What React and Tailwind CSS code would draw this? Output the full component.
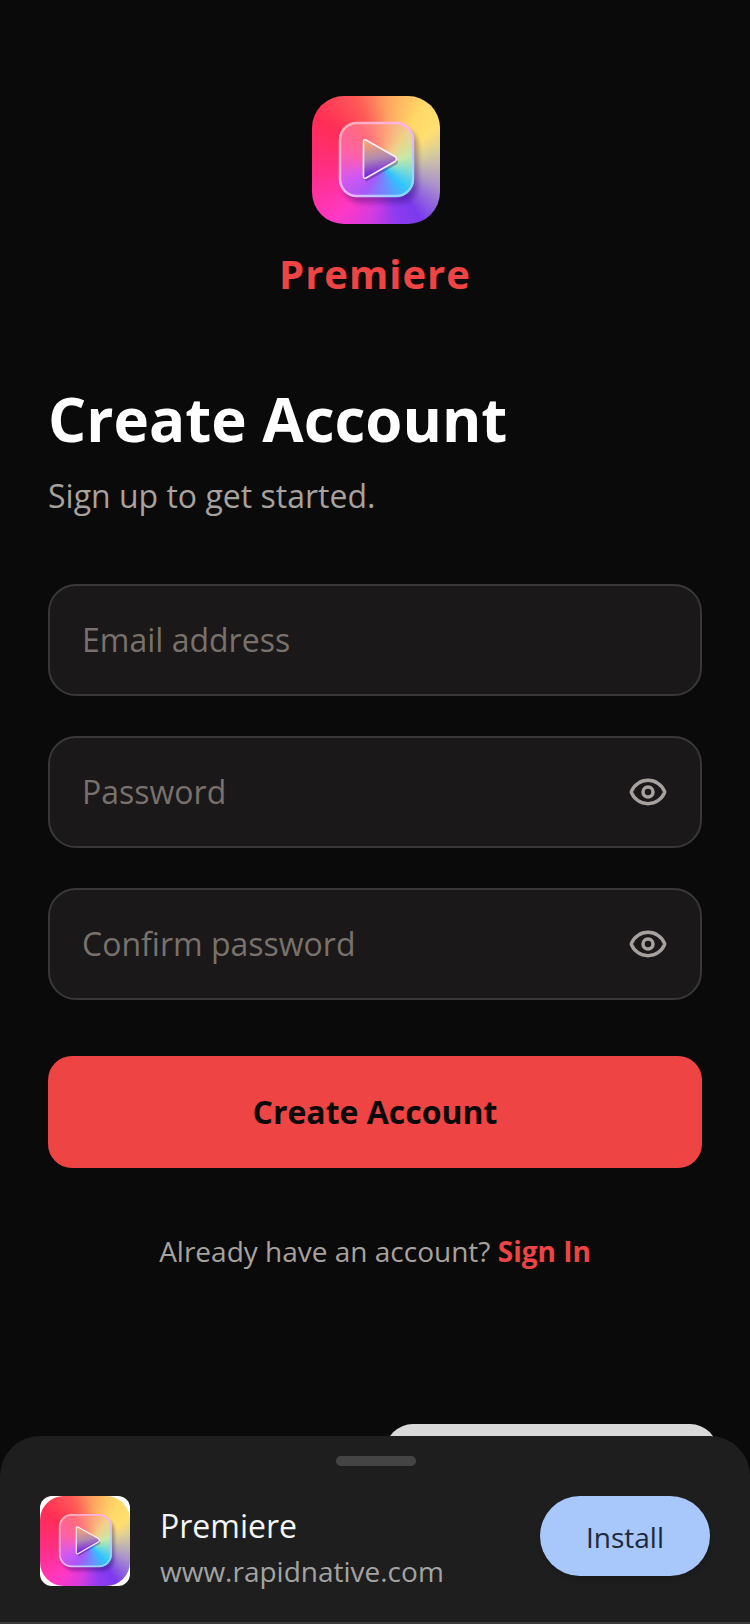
const FONT = "font-['Open_Sans','Noto_Sans',sans-serif]";

function EyeIcon() {
  return (
    <svg width="40" height="40" viewBox="0 0 24 24" fill="none" stroke="#a8a29e" strokeWidth="2.1" strokeLinecap="round" strokeLinejoin="round">
      <path d="M2.06 12.35a1 1 0 0 1 0-.7 10.75 10.75 0 0 1 19.88 0 1 1 0 0 1 0 .7 10.75 10.75 0 0 1-19.88 0" />
      <circle cx="12" cy="12" r="3" />
    </svg>
  );
}

function AppIcon({ id, className }) {
  return (
    <div className={`relative overflow-hidden bg-[conic-gradient(from_0deg_at_60%_56%,#ffa860_0deg,#ffd868_28deg,#ffe070_50deg,#d8cb9c_72deg,#bdb0b4_92deg,#a890cc_112deg,#7c3aed_148deg,#8f3cf0_172deg,#d43ce0_200deg,#ff38c4_228deg,#ff2f88_265deg,#ff2d55_305deg,#ff5a58_335deg,#ffa860_360deg)] ${className}`}>
      <svg viewBox="0 0 128 128" className="absolute inset-0 w-full h-full">
        <defs>
          <filter id={`${id}-blur`} x="-30%" y="-30%" width="160%" height="160%">
            <feGaussianBlur stdDeviation="2.5" />
          </filter>
        </defs>
        <rect x="31" y="32" width="75" height="75" rx="18" fill="#2a1070" opacity="0.38" filter={`url(#${id}-blur)`} />
      </svg>
      <div className="absolute left-[21%] top-[20.3%] w-[58.6%] h-[58.6%] rounded-[24%] bg-[conic-gradient(from_0deg_at_58%_58%,#ff9a78_0deg,#f0d088_35deg,#c8e8a8_70deg,#80dcd0_100deg,#30c4ff_135deg,#6a90ff_170deg,#a858f8_215deg,#d458f0_250deg,#ff60a8_290deg,#ff6c7c_330deg,#ff9a78_360deg)]" />
      <svg viewBox="0 0 128 128" className="absolute inset-0 w-full h-full">
        <defs>
          <linearGradient id={`${id}-edge`} x1="0" y1="0" x2="1" y2="1">
            <stop offset="0" stopColor="#ffb0b0" />
            <stop offset="0.5" stopColor="#ffb0f4" />
            <stop offset="1" stopColor="#6fe0ff" />
          </linearGradient>
          <linearGradient id={`${id}-play`} x1="0.15" y1="0" x2="0.3" y2="1">
            <stop offset="0" stopColor="#ffa868" />
            <stop offset="0.5" stopColor="#b08ab0" />
            <stop offset="1" stopColor="#6a10e8" />
          </linearGradient>
        </defs>
        <rect x="28" y="27" width="73" height="73" rx="17" fill="none" stroke={`url(#${id}-edge)`} strokeWidth="2.5" />
        <path d="M54 44 L83 60.5 Q86 63 83 65.5 L54 82 Q51.5 83 51.5 80 V46 Q51.5 43 54 44 Z" fill="#2a1070" opacity="0.35" transform="translate(1.5 3)" />
        <path d="M54 44 L83 60.5 Q86 63 83 65.5 L54 82 Q51.5 83 51.5 80 V46 Q51.5 43 54 44 Z" fill={`url(#${id}-play)`} stroke="#fbeef8" strokeWidth="1.6" strokeLinejoin="round" />
      </svg>
    </div>
  );
}

function Field({ placeholder, eye }) {
  return (
    <div className="h-28 flex items-center justify-between pl-[32px] pr-[32px] bg-[#1b1819] border-2 border-[#383838] rounded-[28px]">
      <input
        readOnly
        placeholder={placeholder}
        className="flex-1 min-w-0 bg-transparent outline-none text-[32px] text-white placeholder:text-[#78716c]"
      />
      {eye && <EyeIcon />}
    </div>
  );
}

export default function App() {
  return (
    <div className={`relative h-[1624px] w-[750px] overflow-hidden bg-[#0a0a0a] ${FONT}`}>
      <div className="flex flex-col items-center pt-24">
        <AppIcon id="main" className="ml-[2px] w-32 h-32 rounded-[32px]" />
        <div className="mt-[22px] text-[40px] leading-[56px] font-bold tracking-[1px] text-[#ef4444]">Premiere</div>
      </div>

      <div className="px-12 mt-[75px]">
        <h1 className="text-[60px] leading-[84px] font-bold text-white">Create Account</h1>
        <p className="mt-[13px] text-[32px] leading-[44px] text-[#a8a29e]">Sign up to get started.</p>

        <div className="mt-[66px] flex flex-col gap-10">
          <Field placeholder="Email address" />
          <Field placeholder="Password" eye />
          <Field placeholder="Confirm password" eye />
        </div>

        <button className="mt-14 w-full h-28 rounded-3xl bg-[#ef4444] text-[32px] font-bold text-[#0a0a0a]">
          Create Account
        </button>

        <p className="mt-[63px] text-center text-[28px] leading-[40px] text-[#a8a29e]">
          Already have an account? <span className="font-bold text-[#ef4444]">Sign In</span>
        </p>
      </div>

      <div className="absolute left-[385px] top-[1424px] w-[333px] h-20 rounded-t-[28px] bg-[#d9d9d9]" />

      <div className="absolute left-0 right-0 bottom-0 h-[188px] rounded-t-[40px] bg-[#1e1e1e] border-b-2 border-[#3a3a3a]">
        <div className="ml-[336px] mt-5 w-20 h-[10px] rounded-full bg-[#444444]" />
        <div className="mt-[30px] pl-10 pr-10 flex items-start">
          <div className="w-[90px] h-[90px] rounded-xl bg-white shrink-0">
            <AppIcon id="small" className="w-[90px] h-[90px] rounded-[24px]" />
          </div>
          <div className="ml-[30px] pt-2 flex-1 flex flex-col">
            <span className="text-[32px] leading-[44px] text-[#f5f5f5]">Premiere</span>
            <span className="mt-[3px] text-[28px] leading-[40px] text-[#a3a3a3]">www.rapidnative.com</span>
          </div>
          <button className="w-[170px] h-20 rounded-full bg-[#a8c7fa] pt-[2px] text-[28px] text-[#1e293b] shadow-md">Install</button>
        </div>
      </div>
    </div>
  );
}
